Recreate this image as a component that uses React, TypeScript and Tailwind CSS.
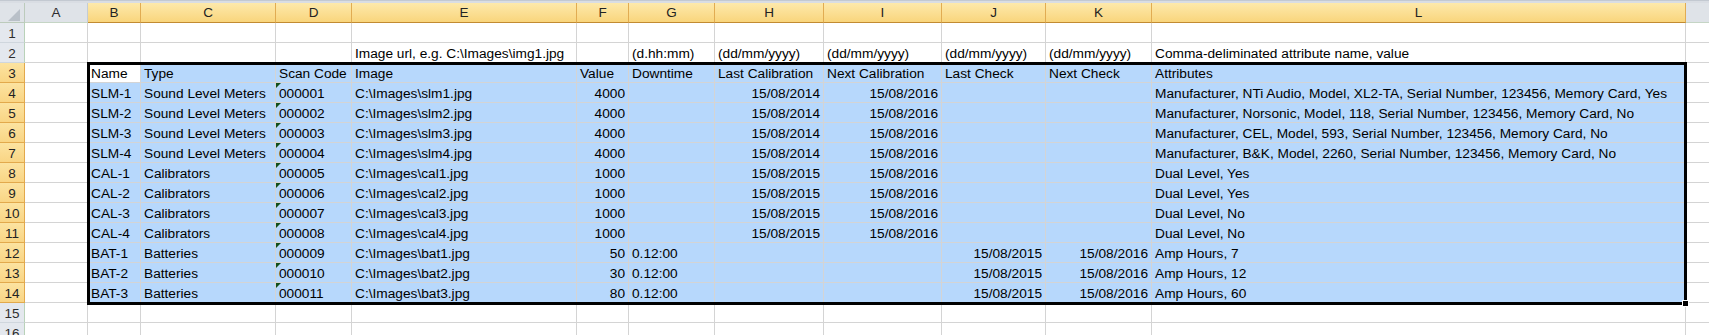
import React from "react";

type Cell = { t: string; r?: boolean };

const W = [
  "w-[25px]",
  "w-[63px]",
  "w-[53px]",
  "w-[135px]",
  "w-[76px]",
  "w-[225px]",
  "w-[52px]",
  "w-[86px]",
  "w-[109px]",
  "w-[118px]",
  "w-[104px]",
  "w-[106px]",
  "w-[534px]",
  "w-[23px]",
];
const LETTERS = ["A", "B", "C", "D", "E", "F", "G", "H", "I", "J", "K", "L"];

const L = (t: string): Cell => ({ t });
const R = (t: string): Cell => ({ t, r: true });
const E: Cell = { t: "" };

const slm = (n: number, v: string, attr: string): Cell[] => [
  E,
  L(`SLM-${n}`),
  L("Sound Level Meters"),
  L(`00000${n}`),
  L(`C:\\Images\\slm${n}.jpg`),
  R(v),
  E,
  R("15/08/2014"),
  R("15/08/2016"),
  E,
  E,
  L(attr),
];
const cal = (n: number, code: string, attr: string): Cell[] => [
  E,
  L(`CAL-${n}`),
  L("Calibrators"),
  L(code),
  L(`C:\\Images\\cal${n}.jpg`),
  R("1000"),
  E,
  R("15/08/2015"),
  R("15/08/2016"),
  E,
  E,
  L(attr),
];
const bat = (n: number, code: string, v: string, attr: string): Cell[] => [
  E,
  L(`BAT-${n}`),
  L("Batteries"),
  L(code),
  L(`C:\\Images\\bat${n}.jpg`),
  R(v),
  L("0.12:00"),
  E,
  E,
  R("15/08/2015"),
  R("15/08/2016"),
  L(attr),
];

const EMPTY: Cell[] = Array.from({ length: 12 }, () => E);

const ROWS: Cell[][] = [
  EMPTY,
  [
    E,
    E,
    E,
    E,
    L("Image url, e.g. C:\\Images\\img1.jpg"),
    E,
    L("(d.hh:mm)"),
    L("(dd/mm/yyyy)"),
    L("(dd/mm/yyyy)"),
    L("(dd/mm/yyyy)"),
    L("(dd/mm/yyyy)"),
    L("Comma-deliminated attribute name, value"),
  ],
  [
    E,
    L("Name"),
    L("Type"),
    L("Scan Code"),
    L("Image"),
    L("Value"),
    L("Downtime"),
    L("Last Calibration"),
    L("Next Calibration"),
    L("Last Check"),
    L("Next Check"),
    L("Attributes"),
  ],
  slm(1, "4000", "Manufacturer, NTi Audio, Model, XL2-TA, Serial Number, 123456, Memory Card, Yes"),
  slm(2, "4000", "Manufacturer, Norsonic, Model, 118, Serial Number, 123456, Memory Card, No"),
  slm(3, "4000", "Manufacturer, CEL, Model, 593, Serial Number, 123456, Memory Card, No"),
  slm(4, "4000", "Manufacturer, B&K, Model, 2260, Serial Number, 123456, Memory Card, No"),
  cal(1, "000005", "Dual Level, Yes"),
  cal(2, "000006", "Dual Level, Yes"),
  cal(3, "000007", "Dual Level, No"),
  cal(4, "000008", "Dual Level, No"),
  bat(1, "000009", "50", "Amp Hours, 7"),
  bat(2, "000010", "30", "Amp Hours, 12"),
  bat(3, "000011", "80", "Amp Hours, 60"),
  EMPTY,
  EMPTY,
];

export default function App() {
  return (
    <div
      className="relative w-[1709px] h-[335px] overflow-hidden bg-white text-black"
      style={{ fontFamily: '"Liberation Sans", Arial, sans-serif' }}
    >
      <div className="h-[3px] bg-[#d9dde3] border-t border-[#c3c9d1]" />
      {/* Column headers */}
      <div className="flex h-[20px]">
        <div className={`${W[0]} relative shrink-0 h-[20px] bg-[#dfe3e8] border-r border-b border-[#bccbbc]`}>
          <svg className="absolute left-[8px] top-[6px]" width="12" height="12" viewBox="0 0 12 12">
            <polygon points="12,0 12,12 0,12" fill="#b9c0c8" />
          </svg>
        </div>
        {LETTERS.map((l, i) => {
          const sel = i > 0;
          return (
            <div
              key={l}
              className={`${W[i + 1]} shrink-0 h-[20px] flex items-center justify-center text-[13.5px] leading-[15px] ${
                sel
                  ? "bg-gradient-to-b from-[#fde9ab] to-[#f9d57c] border-r border-b border-r-[#e1ac52] border-b-[#c28b32] text-[#222]"
                  : "bg-[#dfe3e8] border-r border-b border-r-[#c4ccd4] border-b-[#c5d5c5] text-[#2d2d2d]"
              }`}
            >
              {l}
            </div>
          );
        })}
        <div className={`${W[13]} shrink-0 h-[20px] bg-[#dfe3e8] border-b border-[#c5d5c5]`} />
      </div>
      {/* Rows */}
      {ROWS.map((row, ri) => {
        const rn = ri + 1;
        const rowSel = rn >= 3 && rn <= 14;
        return (
          <div key={rn} className="flex h-[20px]">
            <div
              className={`${W[0]} shrink-0 h-[20px] flex items-center justify-center pt-[1px] text-[13.5px] leading-[15px] border-r border-b ${
                rowSel
                  ? "bg-gradient-to-b from-[#fce3a0] to-[#f9d584] border-[#e2a94c] text-[#222]"
                  : "bg-[#e4e8ee] border-r-[#b9d2b9] border-b-[#cfd6dd] text-[#2d2d2d]"
              }`}
            >
              {rn}
            </div>
            {row.map((c, ci) => {
              const sel = rowSel && ci > 0;
              const active = rn === 3 && ci === 1;
              const bg = active ? "bg-white" : sel ? "bg-[#b7d8fc]" : "bg-white";
              const tri = ci === 3 && rn >= 4 && rn <= 14;
              return (
                <div
                  key={ci}
                  className={`${W[ci + 1]} relative shrink-0 h-[20px] border-r border-b border-[#d4d4d4] ${bg} flex items-end overflow-hidden whitespace-nowrap text-[13.7px] leading-[15px] pb-[1px] ${
                    c.r ? "justify-end pr-[3px]" : "justify-start pl-[3px]"
                  }`}
                >
                  {tri && (
                    <div className="absolute left-0 top-0 w-0 h-0 border-t-[5px] border-r-[5px] border-t-[#12501a] border-r-transparent" />
                  )}
                  {c.t}
                </div>
              );
            })}
            <div className={`${W[13]} shrink-0 h-[20px] border-b border-[#d4d4d4]`} />
          </div>
        );
      })}
      {/* selection border */}
      <div className="absolute left-[87px] top-[62px] w-[1600px] h-[243px] border-[3px] border-black pointer-events-none" />
      {/* fill handle */}
      <div className="absolute left-[1682px] top-[300px] w-[7px] h-[7px] bg-black border border-white" />
    </div>
  );
}
